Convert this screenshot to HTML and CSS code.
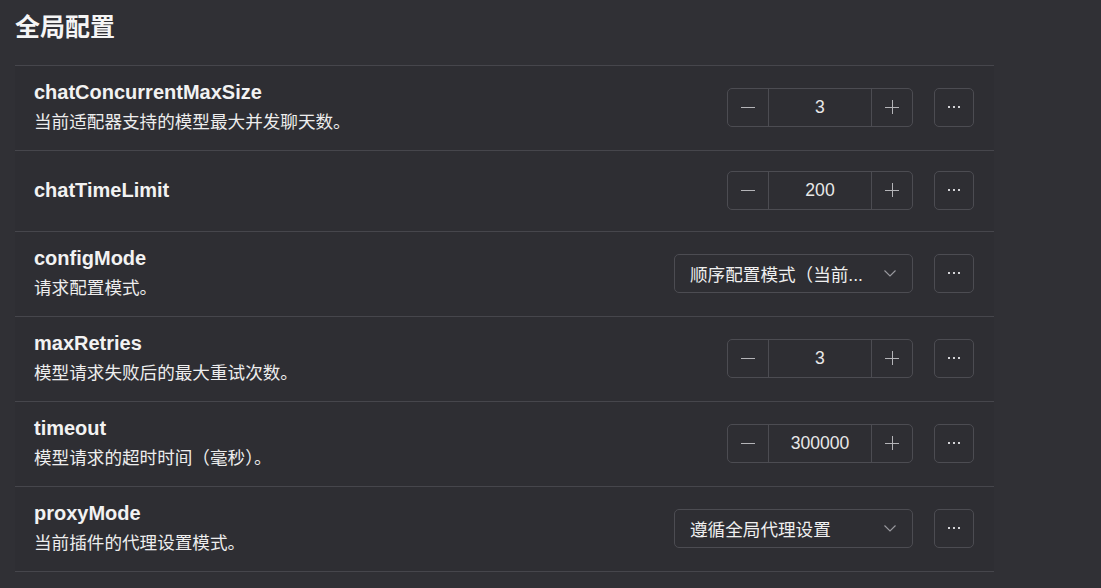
FILE: index.html
```html
<!DOCTYPE html>
<html lang="zh-CN">
<head>
<meta charset="utf-8">
<title>全局配置</title>
<link rel="stylesheet" href="styles.css">
</head>
<body>
<div class="page">
  <h2 class="title">全局配置</h2>
  <div class="section">
    <div class="row">
      <div class="info">
        <div class="name">chatConcurrentMaxSize</div>
        <div class="desc">当前适配器支持的模型最大并发聊天数。</div>
      </div>
      <div class="controls">
        <div class="number">
          <span class="step"><span class="minus"></span></span>
          <span class="value">3</span>
          <span class="step"><span class="plus"></span></span>
        </div>
        <button class="more"><span class="dots"><i></i><i></i><i></i></span></button>
      </div>
    </div>
    <div class="row">
      <div class="info">
        <div class="name">chatTimeLimit</div>
      </div>
      <div class="controls">
        <div class="number">
          <span class="step"><span class="minus"></span></span>
          <span class="value">200</span>
          <span class="step"><span class="plus"></span></span>
        </div>
        <button class="more"><span class="dots"><i></i><i></i><i></i></span></button>
      </div>
    </div>
    <div class="row">
      <div class="info">
        <div class="name">configMode</div>
        <div class="desc">请求配置模式。</div>
      </div>
      <div class="controls">
        <div class="select">
          <span class="sel-text">顺序配置模式（当前...</span>
          <svg class="chev" width="12" height="7" viewBox="0 0 12 7"><path d="M0.5 0.5 L6 6 L11.5 0.5" fill="none" stroke="#9a9aa0" stroke-width="1.1"/></svg>
        </div>
        <button class="more"><span class="dots"><i></i><i></i><i></i></span></button>
      </div>
    </div>
    <div class="row">
      <div class="info">
        <div class="name">maxRetries</div>
        <div class="desc">模型请求失败后的最大重试次数。</div>
      </div>
      <div class="controls">
        <div class="number">
          <span class="step"><span class="minus"></span></span>
          <span class="value">3</span>
          <span class="step"><span class="plus"></span></span>
        </div>
        <button class="more"><span class="dots"><i></i><i></i><i></i></span></button>
      </div>
    </div>
    <div class="row">
      <div class="info">
        <div class="name">timeout</div>
        <div class="desc">模型请求的超时时间（毫秒）。</div>
      </div>
      <div class="controls">
        <div class="number">
          <span class="step"><span class="minus"></span></span>
          <span class="value">300000</span>
          <span class="step"><span class="plus"></span></span>
        </div>
        <button class="more"><span class="dots"><i></i><i></i><i></i></span></button>
      </div>
    </div>
    <div class="row last">
      <div class="info">
        <div class="name">proxyMode</div>
        <div class="desc">当前插件的代理设置模式。</div>
      </div>
      <div class="controls">
        <div class="select">
          <span class="sel-text">遵循全局代理设置</span>
          <svg class="chev" width="12" height="7" viewBox="0 0 12 7"><path d="M0.5 0.5 L6 6 L11.5 0.5" fill="none" stroke="#9a9aa0" stroke-width="1.1"/></svg>
        </div>
        <button class="more"><span class="dots"><i></i><i></i><i></i></span></button>
      </div>
    </div>
  </div>
</div>
</body>
</html>
```
FILE: styles.css
```css
html, body {
  margin: 0;
  padding: 0;
  background: #303035;
  height: 100%;
}
body {
  font-family: "Liberation Sans", "Noto Sans CJK SC", sans-serif;
  color: #ececec;
  overflow: hidden;
}
.page {
  padding: 11px 0 0 15px;
  width: 979px;
}
.title {
  margin: 0 0 22px 0;
  font-size: 25px;
  line-height: 32px;
  font-weight: bold;
  color: #f5f5f5;
}
.section {
  background: #2e2e33;
}
.row {
  display: flex;
  align-items: center;
  justify-content: space-between;
  box-sizing: border-box;
  min-height: 81px;
  padding: 14px 20px 16px 19px;
  border-top: 1px solid #46464c;
}
.row.last {
  border-bottom: 1px solid #46464c;
}
.info {
  display: flex;
  flex-direction: column;
  gap: 6px;
}
.name {
  font-size: 20px;
  line-height: 24px;
  font-weight: bold;
  color: #f2f2f2;
}
.desc {
  font-size: 17.6px;
  line-height: 24px;
  color: #ededed;
}
.controls {
  display: flex;
  align-items: center;
  gap: 21px;
}
.number {
  display: flex;
  box-sizing: border-box;
  width: 186px;
  height: 39px;
  border: 1px solid #4c4c52;
  border-radius: 5px;
}
.step {
  width: 40px;
  display: flex;
  align-items: center;
  justify-content: center;
}
.value {
  flex: 1;
  display: flex;
  align-items: center;
  justify-content: center;
  border-left: 1px solid #4c4c52;
  border-right: 1px solid #4c4c52;
  font-size: 17.6px;
  color: #e8e8e8;
}
.minus {
  display: block;
  width: 14px;
  height: 1px;
  background: #b4b4b8;
}
.plus {
  display: block;
  position: relative;
  width: 14px;
  height: 14px;
}
.plus::before, .plus::after {
  content: "";
  position: absolute;
  background: #b4b4b8;
}
.plus::before {
  left: 0;
  top: 7px;
  width: 14px;
  height: 1px;
}
.plus::after {
  left: 7px;
  top: 0;
  width: 1px;
  height: 14px;
}
.more {
  box-sizing: border-box;
  width: 40px;
  height: 39px;
  padding: 0;
  background: transparent;
  border: 1px solid #4c4c52;
  border-radius: 5px;
  display: flex;
  align-items: center;
  justify-content: center;
}
.dots {
  display: flex;
  gap: 3px;
}
.dots i {
  display: block;
  width: 2px;
  height: 2px;
  background: #d2d2d6;
}
.select {
  box-sizing: border-box;
  width: 239px;
  height: 39px;
  border: 1px solid #4c4c52;
  border-radius: 5px;
  display: flex;
  align-items: center;
  justify-content: space-between;
  padding: 0 16px 0 15px;
}
.sel-text {
  font-size: 17.6px;
  color: #efefef;
  white-space: nowrap;
}
.chev {
  display: block;
}
```
